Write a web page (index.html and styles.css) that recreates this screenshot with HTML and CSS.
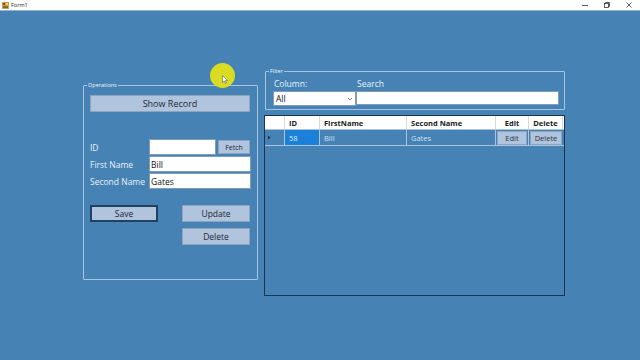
FILE: index.html
```html
<!DOCTYPE html>
<html>
<head>
<meta charset="utf-8">
<link rel="stylesheet" href="styles.css">
</head>
<body>
<div class="window">
  <div class="titlebar">
    <div class="title">
      <svg class="appicon" width="7" height="7" viewBox="0 0 7 7"><rect x="0" y="0" width="7" height="7" fill="#c9a24a"/><rect x="1" y="1" width="2" height="2" fill="#a33"/><rect x="4" y="1" width="2" height="2" fill="#e6d28a"/><rect x="1" y="4" width="5" height="2" fill="#8a6a2a"/></svg>
      <span>Form1</span>
    </div>
    <div class="winbtns">
      <span class="wb">
        <svg width="8" height="8" viewBox="0 0 8 8"><line x1="1" y1="4.5" x2="7" y2="4.5" stroke="#333" stroke-width="0.8"/></svg>
      </span>
      <span class="wb">
        <svg width="8" height="8" viewBox="0 0 8 8"><rect x="1.5" y="2.5" width="4" height="4" fill="none" stroke="#333" stroke-width="0.8"/><polyline points="2.5,2.5 2.5,1.5 6.5,1.5 6.5,5.5 5.5,5.5" fill="none" stroke="#333" stroke-width="0.8"/></svg>
      </span>
      <span class="wb">
        <svg width="8" height="8" viewBox="0 0 8 8"><line x1="1.5" y1="1.5" x2="6.5" y2="6.5" stroke="#333" stroke-width="0.8"/><line x1="6.5" y1="1.5" x2="1.5" y2="6.5" stroke="#333" stroke-width="0.8"/></svg>
      </span>
    </div>
  </div>
  <div class="client">
    <div class="ops group">
      <span class="legend">Operations</span>
      <button class="btn show">Show Record</button>
      <div class="fields">
        <div class="frow">
          <label>ID</label>
          <input class="tb tb-id" value="">
          <button class="btn fetch">Fetch</button>
        </div>
        <div class="frow">
          <label>First Name</label>
          <input class="tb tb-wide" value="Bill">
        </div>
        <div class="frow">
          <label>Second Name</label>
          <input class="tb tb-wide" value="Gates">
        </div>
      </div>
      <div class="actions">
        <button class="btn act save">Save</button>
        <div class="actcol">
          <button class="btn act">Update</button>
          <button class="btn act">Delete</button>
        </div>
      </div>
    </div>
    <div class="right">
      <div class="filter group">
        <span class="legend">Filter</span>
        <div class="fcols">
          <div class="fcol">
            <span class="flabel">Column:</span>
            <div class="combo"><span>All</span>
              <svg width="6" height="4" viewBox="0 0 6 4"><polyline points="1,1 3,3 5,1" fill="none" stroke="#666" stroke-width="0.8"/></svg>
            </div>
          </div>
          <div class="fcol grow">
            <span class="flabel">Search</span>
            <div class="search"></div>
          </div>
        </div>
      </div>
      <div class="grid">
        <div class="grow-row head">
          <div class="c rh"></div>
          <div class="c cid">ID</div>
          <div class="c cfn">FirstName</div>
          <div class="c csn">Second Name</div>
          <div class="c ced">Edit</div>
          <div class="c cdl">Delete</div>
        </div>
        <div class="grow-row data">
          <div class="c rh"><svg width="4" height="5" viewBox="0 0 4 5"><polygon points="1,0.5 3.5,2.5 1,4.5" fill="#1a2a3a"/></svg></div>
          <div class="c cid sel">58</div>
          <div class="c cfn">Bill</div>
          <div class="c csn">Gates</div>
          <div class="c ced"><span class="cellbtn">Edit</span></div>
          <div class="c cdl"><span class="cellbtn">Delete</span></div>
        </div>
      </div>
    </div>
    <div class="cursor-hl">
      <svg class="arrow" width="6" height="9" viewBox="0 0 6 9"><polygon points="0.5,0.5 0.5,7.5 2.2,6 3.4,8.5 4.4,8 3.3,5.6 5.5,5.5" fill="#fff" stroke="#444" stroke-width="0.5"/></svg>
    </div>
  </div>
</div>
</body>
</html>
```

FILE: styles.css
```css
* { box-sizing: border-box; }
html, body { margin: 0; padding: 0; }
body {
  width: 640px;
  height: 360px;
  overflow: hidden;
  font-family: "Open Sans", "Noto Sans", sans-serif;
  background: #4682b4;
}
.window { width: 640px; height: 360px; display: flex; flex-direction: column; }
.titlebar {
  height: 11px;
  background: #fff;
  display: flex;
  align-items: center;
  justify-content: space-between;
  border-bottom: 1px solid #8fb4d6;
  flex: none;
}
.title { display: flex; align-items: center; gap: 2px; padding-left: 2px; font-size: 5.5px; color: #222; }
.appicon { display: block; }
.winbtns { display: flex; }
.wb { width: 22px; height: 10px; display: flex; align-items: center; justify-content: center; }
.client {
  position: relative;
  flex: 1;
  background: #4682b4;
  display: flex;
  align-items: flex-start;
  padding-left: 83px;
  padding-top: 60px;
}
.group {
  position: relative;
  border: 1px solid #a7c5e2;
  border-radius: 1px;
}
.legend {
  position: absolute;
  top: -4px;
  left: 3px;
  font-size: 5.5px;
  line-height: 6px;
  color: #f0f6ff;
  background: #4682b4;
  padding: 0 1px;
}
.ops {
  margin-top: 14px;
  width: 175px;
  height: 195px;
  padding: 9px 6px 0 6px;
}
.btn {
  font-family: "Open Sans", "Noto Sans", sans-serif;
  background: #b0c4de;
  border: 1px solid #8ea3bd;
  color: #1e2630;
  padding: 0;
  margin: 0;
  display: flex;
  align-items: center;
  justify-content: center;
}
.show { width: 160px; height: 17px; font-size: 9px; }
.fields { margin-top: 27px; display: flex; flex-direction: column; gap: 1px; }
.frow { display: flex; align-items: center; height: 16px; }
.frow label { width: 59px; font-size: 8.5px; color: #e8f1fa; white-space: nowrap; }
.tb {
  font-family: "Open Sans", "Noto Sans", sans-serif;
  font-size: 8.5px;
  color: #111;
  background: #fff;
  border: 1px solid #7f9db9;
  height: 16px;
  padding: 0 1px;
  margin: 0;
  outline: none;
}
.tb-id { width: 67px; }
.tb-wide { width: 102px; }
.fetch { width: 32px; height: 14px; margin-left: 2px; font-size: 7px; }
.actions { margin-top: 16px; display: flex; justify-content: space-between; padding-right: 1px; }
.actcol { display: flex; flex-direction: column; gap: 6px; }
.act { width: 68px; height: 17px; font-size: 8.5px; }
.save { border: 2px solid #22405f; }
.right { margin-left: 6px; display: flex; flex-direction: column; }
.filter {
  margin-left: 1px;
  width: 300px;
  height: 39px;
  padding: 7px 5px 0 7px;
}
.fcols { display: flex; }
.fcol { display: flex; flex-direction: column; }
.fcol.grow { flex: 1; }
.flabel { font-size: 8.5px; line-height: 10px; color: #e8f1fa; height: 10px; padding-left: 1px; }
.combo {
  margin-top: 2px;
  width: 83px;
  height: 15px;
  background: #fff;
  border: 1px solid #7f9db9;
  display: flex;
  align-items: center;
  justify-content: space-between;
  padding: 0 2px;
  font-size: 8.5px;
  color: #111;
}
.search {
  margin-top: 2px;
  height: 14px;
  background: #fff;
  border: 1px solid #7f9db9;
}
.grid {
  margin-top: 5px;
  width: 301px;
  height: 181px;
  border: 1px solid #1a3552;
  background: #4682b4;
}
.grow-row { display: flex; height: 15px; }
.grow-row.head { background: #fff; height: 14px; border-bottom: 1px solid #a9c4de; }
.grow-row.data { height: 16px; border-bottom: 1px solid #a9c4de; }
.c {
  display: flex;
  align-items: center;
  padding-left: 4px;
  font-size: 7.5px;
  white-space: nowrap;
  border-right: 1px solid #a9c4de;
}
.head .c { font-weight: 700; color: #1a1a1a; border-right: 1px solid #d8d8d8; }
.data .c { color: #cfe1f3; font-size: 7.5px; }
.rh { width: 20px; padding-left: 2px; }
.cid { width: 35px; }
.cfn { width: 87px; }
.csn { width: 89px; }
.ced { width: 33px; padding: 0 1px; justify-content: center; }
.cdl { width: 34px; padding: 0 1px; justify-content: center; border-right: none; }
.head .ced, .head .cdl { padding: 0; }
.data .sel { background: #1a80d8; color: #d8ecff; }
.cellbtn {
  width: 100%;
  height: 14px;
  background: #b0c4de;
  border: 1px solid #8ea3bd;
  color: #2a3440;
  display: flex;
  align-items: center;
  justify-content: center;
  font-size: 7.5px;
}
.cursor-hl {
  position: absolute;
  left: 210px;
  top: 52px;
  width: 25px;
  height: 25px;
  border-radius: 50%;
  background: #d9dc22;
}
.arrow { position: absolute; left: 12px; top: 12px; }
```
